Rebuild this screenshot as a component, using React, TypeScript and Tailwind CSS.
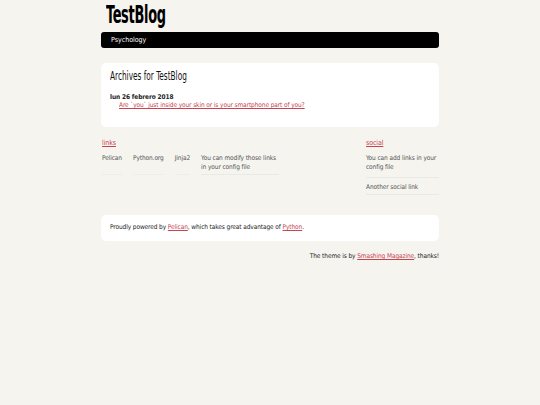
const head = { fontFamily: '"DejaVu Sans Condensed", "DejaVu Sans", sans-serif' };
const body = { fontFamily: '"DejaVu Sans Condensed", "DejaVu Sans", sans-serif' };

const links = ['Pelican', 'Python.org', 'Jinja2'];

export default function App() {
  return (
    <div className="min-h-screen bg-[#f5f4ef] text-[#222]" style={body}>
      <div className="mx-auto w-[338px]">
        <header className="pl-[5px] pt-[0px]">
          <h1
            className="w-max origin-left scale-x-[0.6] text-[24px] font-bold leading-[30px] tracking-[-0.5px] text-[#000]"
            style={head}
          >
            TestBlog
          </h1>
        </header>

        <nav className="mt-[2px] flex h-[16px] items-center rounded-[3px] bg-black px-[10px]">
          <a className="text-[7px] text-white">Psychology</a>
        </nav>

        <section className="mt-[15px] h-[64px] rounded-[5px] bg-white px-[9px] pt-[5px]">
          <h2
            className="w-max origin-left scale-x-[0.63] text-[13px] leading-[16px] text-[#111]"
            style={head}
          >
            Archives for TestBlog
          </h2>
          <dl className="mt-[9px] text-[6.5px] leading-[8px] tracking-[-0.1px]">
            <dt className="font-bold">lun 26 febrero 2018</dt>
            <dd className="pl-[9px]">
              <a className="text-[#c74350] underline">
                Are `you` just inside your skin or is your smartphone part of you?
              </a>
            </dd>
          </dl>
        </section>

        <section className="mt-[12px] flex h-[76px] justify-between text-[6.5px] leading-[9px] tracking-[-0.1px] text-[#555]">
          <div className="pl-[1px]">
            <h2 className="text-[7px] text-[#c74350] underline">links</h2>
            <ul className="mt-[6px] flex">
              {links.map((l) => (
                <li key={l} className="mr-[11px] border-b border-[#eeede8] pb-[2px]">
                  {l}
                </li>
              ))}
              <li className="w-[78px] border-b border-[#eae9e4] pb-[2px]">
                You can modify those links in your config file
              </li>
            </ul>
          </div>
          <div className="w-[73px]">
            <h2 className="text-[7px] text-[#c74350] underline">social</h2>
            <ul className="mt-[6px]">
              <li className="border-b border-[#eae9e4] pb-[5px]">You can add links in your config file</li>
              <li className="border-b border-[#eae9e4] pt-[5px] pb-[2px]">Another social link</li>
            </ul>
          </div>
        </section>

        <footer className="flex h-[26px] items-center rounded-[5px] bg-white px-[9px] text-[6.5px] tracking-[-0.1px]">
          <p>
            Proudly powered by <a className="text-[#c74350] underline">Pelican</a>, which takes great advantage of{' '}
            <a className="text-[#c74350] underline">Python</a>.
          </p>
        </footer>

        <p className="mt-[11px] text-right text-[6.5px] tracking-[-0.1px]">
          The theme is by <a className="text-[#c74350] underline">Smashing Magazine</a>, thanks!
        </p>
      </div>
    </div>
  );
}
